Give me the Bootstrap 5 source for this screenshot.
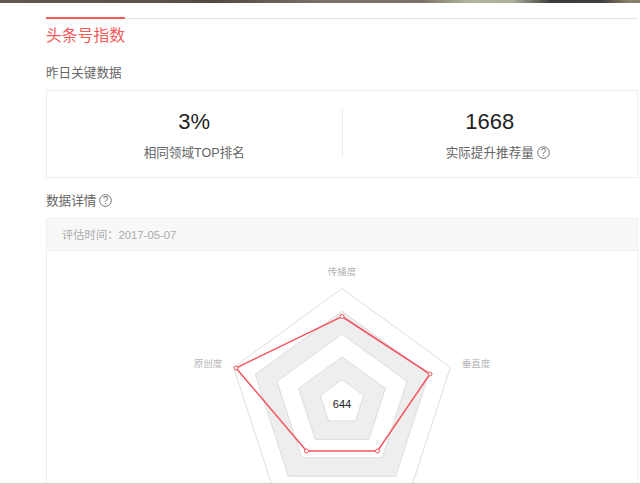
<!DOCTYPE html>
<html lang="zh">
<head>
<meta charset="utf-8">
<link rel="stylesheet" href="https://cdn.jsdelivr.net/npm/bootstrap@5.3.0/dist/css/bootstrap.min.css">
<style>
html,body{height:484px;overflow:hidden;background:#fff;}
body{font-family:"Liberation Sans","Noto Sans CJK SC",sans-serif;color:#666;}
.topstrip{height:3px;background:linear-gradient(90deg,#5f5a4c 0%,#595447 25%,#4f4a40 33%,#777263 50%,#7a7566 66%,#b3b2a0 73%,#b0af9c 80%,#3d3c3b 86%,#3f3e3c 94%,#8a8068 98%,#8a8068 100%);}
.pagewrap{height:480px;overflow:hidden;padding:15px 2px 0 46px;}
.bottomrule{height:1px;background:#d0d0cc;}
.tabline{border-top:1px solid #e4e4e4;}
.tabitem{margin-top:-2px;border-top:2px solid #f85959;color:#f85959;font-size:15.8px;line-height:33px;width:79px;white-space:nowrap;}
.subhead{font-size:12.6px;line-height:20px;color:#666;}
.headone{margin-top:11px;margin-bottom:7px;}
.headtwo{margin-top:13px;margin-bottom:7px;}
.statbox{border:1px solid #eee;height:88px;}
.statcell{flex:1 1 0;padding-top:17px;text-align:center;}
.statdiv{width:1px;height:47px;margin-top:19px;background:#eaeaea;flex:none;}
.statnum{font-size:22px;line-height:28px;color:#222;}
.statlabel{font-size:12.6px;line-height:20px;margin-top:7px;color:#666;}
.qmark{display:inline-block;vertical-align:-2px;margin-left:3px;}
.qtail{margin-right:-16px;}
.detailbox{border:1px solid #eee;}
.detailhead{height:32px;background:#f8f8f8;border-bottom:1px solid #eee;padding-left:15px;font-size:11.3px;line-height:32px;color:#aaa;}
.radar{display:block;width:590px;height:240px;}
.radar text{font-family:"Liberation Sans","Noto Sans CJK SC",sans-serif;}
</style>
</head>
<body>
<div class="topstrip"></div>
<div class="pagewrap">
  <div class="tabline"><div class="tabitem">头条号指数</div></div>
  <div class="subhead headone">昨日关键数据</div>
  <div class="statbox d-flex">
    <div class="statcell">
      <div class="statnum">3%</div>
      <div class="statlabel">相同领域TOP排名</div>
    </div>
    <div class="statdiv"></div>
    <div class="statcell">
      <div class="statnum">1668</div>
      <div class="statlabel">实际提升推荐量<svg class="qmark qtail" width="13" height="13" viewBox="0 0 13 13"><circle cx="6.5" cy="6.5" r="5.8" fill="none" stroke="#777" stroke-width="1"/><text x="6.5" y="10" text-anchor="middle" font-size="10" fill="#777">?</text></svg></div>
    </div>
  </div>
  <div class="subhead headtwo">数据详情<svg class="qmark" width="13" height="13" viewBox="0 0 13 13"><circle cx="6.5" cy="6.5" r="5.8" fill="none" stroke="#777" stroke-width="1"/><text x="6.5" y="10" text-anchor="middle" font-size="10" fill="#777">?</text></svg></div>
  <div class="detailbox">
    <div class="detailhead">评估时间：2017-05-07</div>
    <svg class="radar" viewBox="47 251 590 240">
      <polygon points="342,288.5 450.4,367.3 409,494.7 275,494.7 233.6,367.3" fill="#fff" stroke="#ddd"/>
      <polygon points="342,311.3 428.7,374.3 395.6,476.2 288.4,476.2 255.3,374.3" fill="#eee" stroke="#ddd"/>
      <polygon points="342,334.1 407,381.4 382.2,457.8 301.8,457.8 277,381.4" fill="#fff" stroke="#ddd"/>
      <polygon points="342,356.9 385.4,388.4 368.8,439.4 315.2,439.4 298.6,388.4" fill="#eee" stroke="#ddd"/>
      <polygon points="342,379.7 363.7,395.5 355.4,421 328.6,421 320.3,395.5" fill="#fff" stroke="#ddd"/>
      <polygon points="342,316.5 430,374 377.5,451 306.5,451 236,368" fill="none" stroke="#f4545e" stroke-width="1.5"/>
      <g fill="#fff" stroke="#f4545e" stroke-width="1">
        <circle cx="342" cy="316.5" r="2"/><circle cx="430" cy="374" r="2"/><circle cx="377.5" cy="451" r="2"/><circle cx="306.5" cy="451" r="2"/><circle cx="236" cy="368" r="2"/>
      </g>
      <text x="342" y="408" text-anchor="middle" font-size="11" fill="#222">644</text>
      <g font-size="9.5" fill="#b4b4b4" text-anchor="middle">
        <text x="342" y="275">传播度</text>
        <text x="476" y="367">垂直度</text>
        <text x="208" y="367">原创度</text>
      </g>
    </svg>
  </div>
</div>
<div class="bottomrule"></div>
</body>
</html>
